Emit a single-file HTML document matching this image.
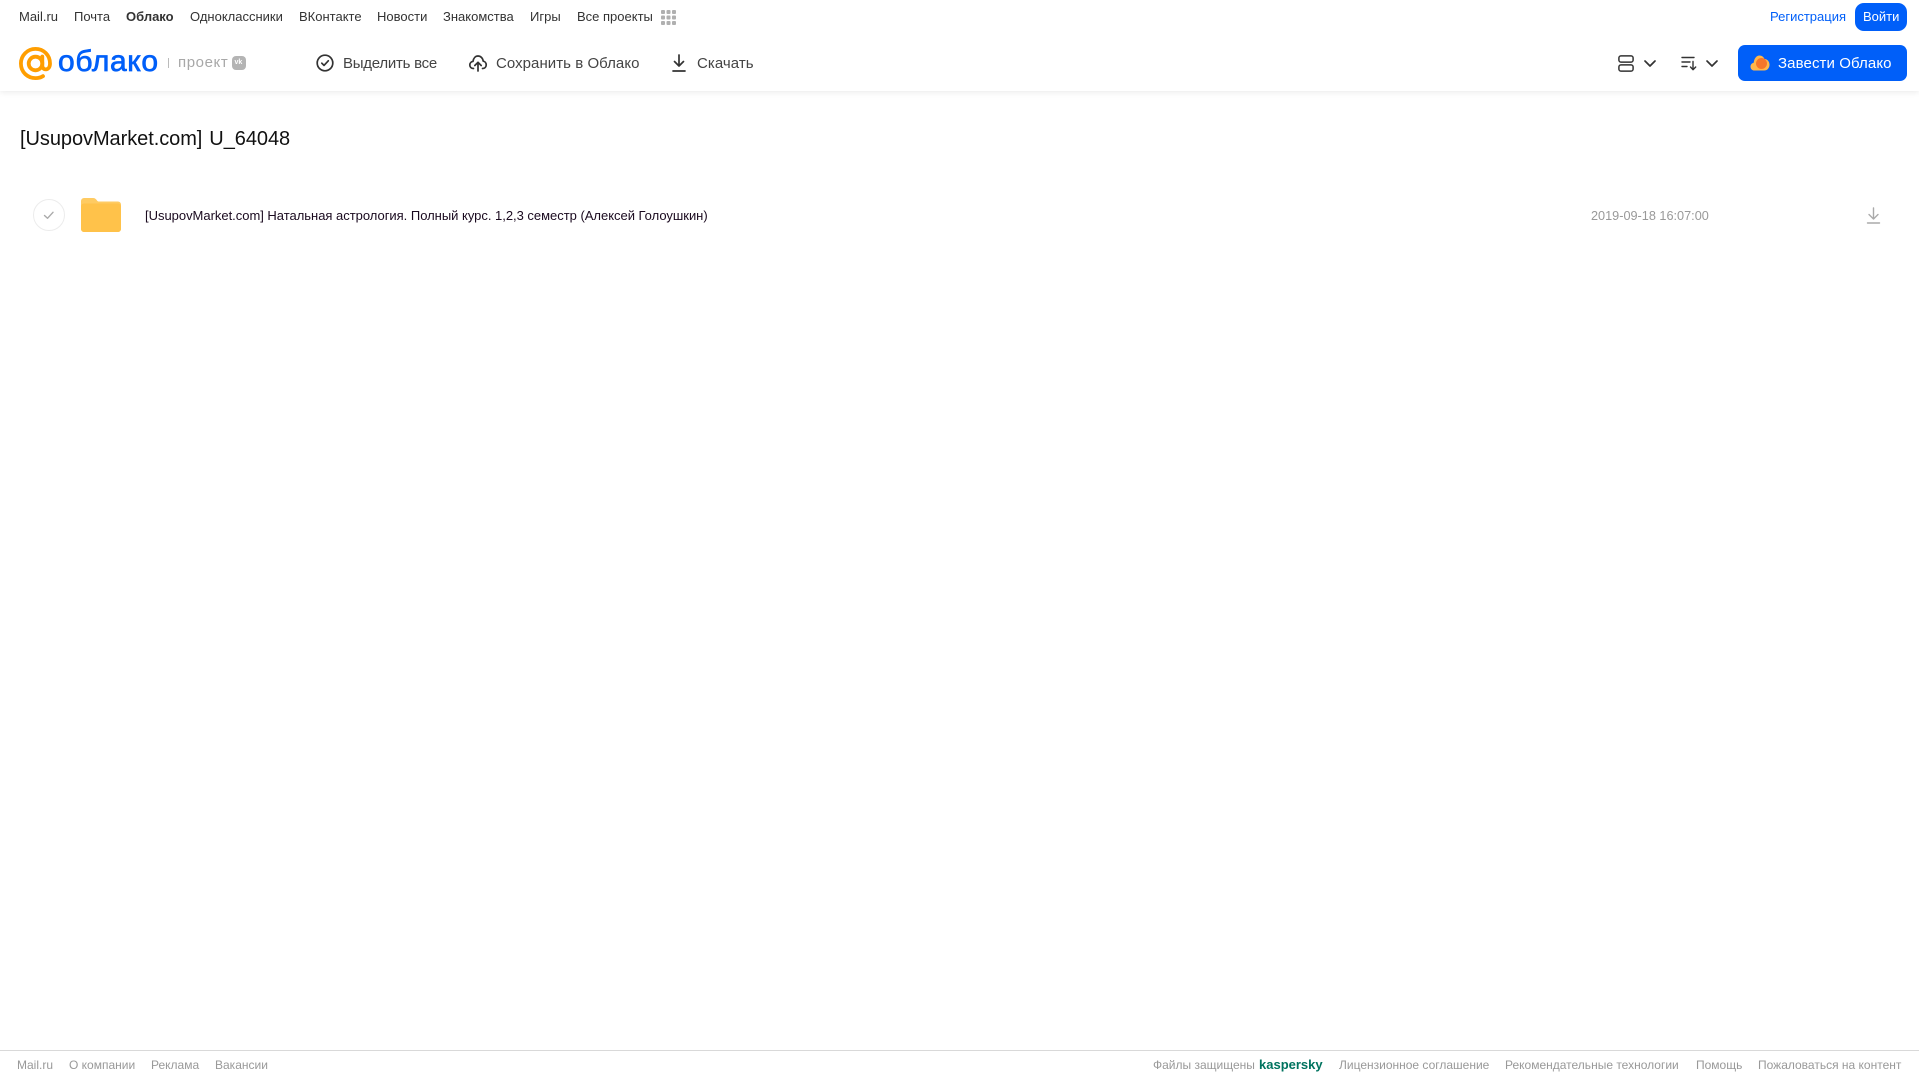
<!DOCTYPE html>
<html lang="ru"><head><meta charset="utf-8"><title>Облако</title>
<style>
html,body{margin:0;padding:0;background:#fff;width:1919px;height:1079px;overflow:hidden;font-family:"Liberation Sans",sans-serif}
.t{position:absolute;white-space:nowrap;line-height:20px}
.n{top:7px;font-size:13px;color:#333}
.b{top:54px;font-size:15px;color:#444;letter-spacing:.05px}
.f{top:1055px;font-size:12px;color:#999}
svg{position:absolute;overflow:visible}
#shadow{position:absolute;left:0;top:0;width:1919px;height:91px;background:#fff;box-shadow:0 1px 6px rgba(0,0,0,.09)}
#bf{position:absolute;left:0;top:1050px;width:1919px;height:1px;background:#d9d9d9}
</style></head><body>
<div id="shadow"></div>
<span class="t n" style="left:19px">Mail.ru</span>
<span class="t n" style="left:74px">Почта</span>
<span class="t n" style="left:126px;font-weight:bold">Облако</span>
<span class="t n" style="left:190px">Одноклассники</span>
<span class="t n" style="left:299px">ВКонтакте</span>
<span class="t n" style="left:377px">Новости</span>
<span class="t n" style="left:443px">Знакомства</span>
<span class="t n" style="left:530px">Игры</span>
<span class="t n" style="left:577px">Все проекты</span>
<svg style="left:661px;top:10px" width="15" height="15" fill="#b0b0b0"><rect x="0" y="0" width="4" height="4" rx="1"/><rect x="5.500" y="0" width="4" height="4" rx="1"/><rect x="11" y="0" width="4" height="4" rx="1"/><rect x="0" y="5.500" width="4" height="4" rx="1"/><rect x="5.500" y="5.500" width="4" height="4" rx="1"/><rect x="11" y="5.500" width="4" height="4" rx="1"/><rect x="0" y="11" width="4" height="4" rx="1"/><rect x="5.500" y="11" width="4" height="4" rx="1"/><rect x="11" y="11" width="4" height="4" rx="1"/></svg>

<svg style="left:19px;top:47px" width="33" height="33" viewBox="0 0 33 33" fill="none" stroke="#ff9e00" stroke-width="3.800"><circle cx="16.500" cy="16.500" r="6.800"/><path d="M23.300 9.500v9c0 5.500 7.700 5.500 7.700-2C31 8 24.500 1.900 16.500 1.900A14.600 14.600 0 0 0 1.900 16.500c0 9 7 14.600 14.600 14.600 3 0 5.500-.7 7.500-2" stroke-linecap="round"/></svg>
<span class="t" style="left:58px;top:44px;font-size:30px;line-height:36px;color:#005ff9;-webkit-text-stroke:.7px #005ff9;letter-spacing:.65px">облако</span>
<div style="position:absolute;left:168px;top:58px;width:1px;height:10px;background:#bbb"></div>
<span class="t" style="left:178px;top:53px;font-size:15px;color:#a8a8a8;letter-spacing:.6px">проект</span>
<div style="position:absolute;left:232px;top:56px;width:14px;height:14px;border-radius:4px;background:#b4b4b4"></div>
<span class="t" style="left:234.500px;top:58px;font-size:7px;line-height:10px;font-weight:bold;color:#fff">vk</span>

<svg style="left:316px;top:54px" width="18" height="18" fill="none" stroke="#333" stroke-width="1.700" stroke-linecap="round" stroke-linejoin="round"><circle cx="9" cy="9" r="7.800"/><path d="M5.800 9.200l2.200 2.200 4.300-4.600"/></svg>
<span class="t b" style="left:343px;letter-spacing:-.25px">Выделить все</span>
<svg style="left:469px;top:54px" width="18" height="18" fill="none" stroke="#333" stroke-width="1.700" stroke-linecap="round" stroke-linejoin="round"><path d="M4.500 14.500C2 14.500.8 12.800.8 11c0-2 1.400-3.400 3.200-3.600C4.500 4 6.500 2 9 2s4.800 2 5.200 5.200c1.800.2 3 1.800 3 3.700 0 1.900-1.300 3.600-3.700 3.600"/><path d="M9 17V8.500M5.800 11.500L9 8.300l3.200 3.200"/></svg>
<span class="t b" style="left:496px">Сохранить в Облако</span>
<svg style="left:672px;top:54px" width="14" height="18" fill="none" stroke="#333" stroke-width="1.700" stroke-linecap="round" stroke-linejoin="round"><path d="M7 1v11M2.500 7.500L7 12l4.500-4.500M1 17h12"/></svg>
<span class="t b" style="left:697px">Скачать</span>

<svg style="left:1618px;top:55px" width="16" height="17" fill="none" stroke="#333" stroke-width="1.500"><rect x=".9" y=".9" width="14.200" height="6.200" rx="2"/><rect x=".9" y="9.900" width="14.200" height="6.200" rx="2"/></svg>
<svg style="left:1644px;top:60px" width="12" height="7" fill="none" stroke="#333" stroke-width="1.700" stroke-linecap="round" stroke-linejoin="round"><path d="M1 1l5 5 5-5"/></svg>
<svg style="left:1681px;top:56px" width="16" height="15" fill="none" stroke="#333" stroke-width="1.400" stroke-linecap="round" stroke-linejoin="round"><path d="M1 1.500h12M1 6h8M1 10.500h5M12 5.500v8M9.500 11l2.500 2.700 2.700-2.700"/></svg>
<svg style="left:1706px;top:60px" width="12" height="7" fill="none" stroke="#333" stroke-width="1.700" stroke-linecap="round" stroke-linejoin="round"><path d="M1 1l5 5 5-5"/></svg>

<span class="t n" style="left:1770px;color:#005ff9">Регистрация</span>
<div style="position:absolute;left:1855px;top:3px;width:52px;height:28px;border-radius:9px;background:#005ff9"></div>
<span class="t n" style="left:1863px;color:#fff">Войти</span>
<div style="position:absolute;left:1738px;top:45px;width:169px;height:36px;border-radius:7px;background:#005ff9"></div>
<svg style="left:1750px;top:54px" width="20" height="18"><path d="M4.500 16.500C2 16.500 .5 14.800.5 12.600c0-2.100 1.400-3.600 3.200-3.900C4.200 4.300 6.500 1.500 9.500 1.500c2.400 0 4.200 1.500 5 3.500 3 .2 5 2.600 5 5.700 0 3.300-2.300 5.800-5.300 5.800z" fill="#ffb74a"/><circle cx="11.500" cy="9.500" r="5.500" fill="#f5762a"/></svg>
<span class="t b" style="left:1778px;color:#fff;letter-spacing:.1px">Завести Облако</span>

<span class="t" style="left:20px;top:126px;font-size:20px;line-height:26px;color:#111;word-spacing:1.500px;letter-spacing:-.06px">[UsupovMarket.com] U_64048</span>

<svg style="left:33px;top:199px" width="32" height="32" fill="none"><circle cx="16" cy="16" r="15.500" stroke="#ececec"/><path d="M11.500 16.500l3 2.800 5.500-6" stroke="#aaa" stroke-width="1.400" stroke-linecap="round" stroke-linejoin="round"/></svg>
<svg style="left:81px;top:198px" width="40" height="34"><path d="M0 3a3 3 0 0 1 3-3h9c2 0 3 1 4 2.500.5.700 1 1 2 1H37a3 3 0 0 1 3 3V31a3 3 0 0 1-3 3H3a3 3 0 0 1-3-3z" fill="#ffcb62"/><path d="M0 8.500a3 3 0 0 1 3-3h34a3 3 0 0 1 3 3V31a3 3 0 0 1-3 3H3a3 3 0 0 1-3-3z" fill="#ffc24a"/></svg>
<span class="t" style="left:145px;top:206px;font-size:13px;letter-spacing:-.02px;color:#1a0a1f">[UsupovMarket.com] Натальная астрология. Полный курс. 1,2,3 семестр (Алексей Голоушкин)</span>
<span class="t" style="left:1591px;top:206px;font-size:12.700px;color:#999">2019-09-18 16:07:00</span>
<svg style="left:1867px;top:207px" width="13" height="17" fill="none" stroke="#aaa" stroke-width="1.400" stroke-linecap="round" stroke-linejoin="round"><path d="M6.500 1v10.500M2 7.500l4.500 4.500L11 7.500M.5 16h12"/></svg>

<div id="bf"></div>
<span class="t f" style="left:17px">Mail.ru</span>
<span class="t f" style="left:69px">О компании</span>
<span class="t f" style="left:151px">Реклама</span>
<span class="t f" style="left:215px">Вакансии</span>
<span class="t f" style="left:1153px">Файлы защищены</span>
<span class="t f" style="left:1259px;top:1055px;color:#00735f;font-weight:bold;font-size:13px">kaspersky</span>
<span class="t f" style="left:1339px">Лицензионное соглашение</span>
<span class="t f" style="left:1505px">Рекомендательные технологии</span>
<span class="t f" style="left:1696px">Помощь</span>
<span class="t f" style="left:1758px">Пожаловаться на контент</span>
</body></html>
